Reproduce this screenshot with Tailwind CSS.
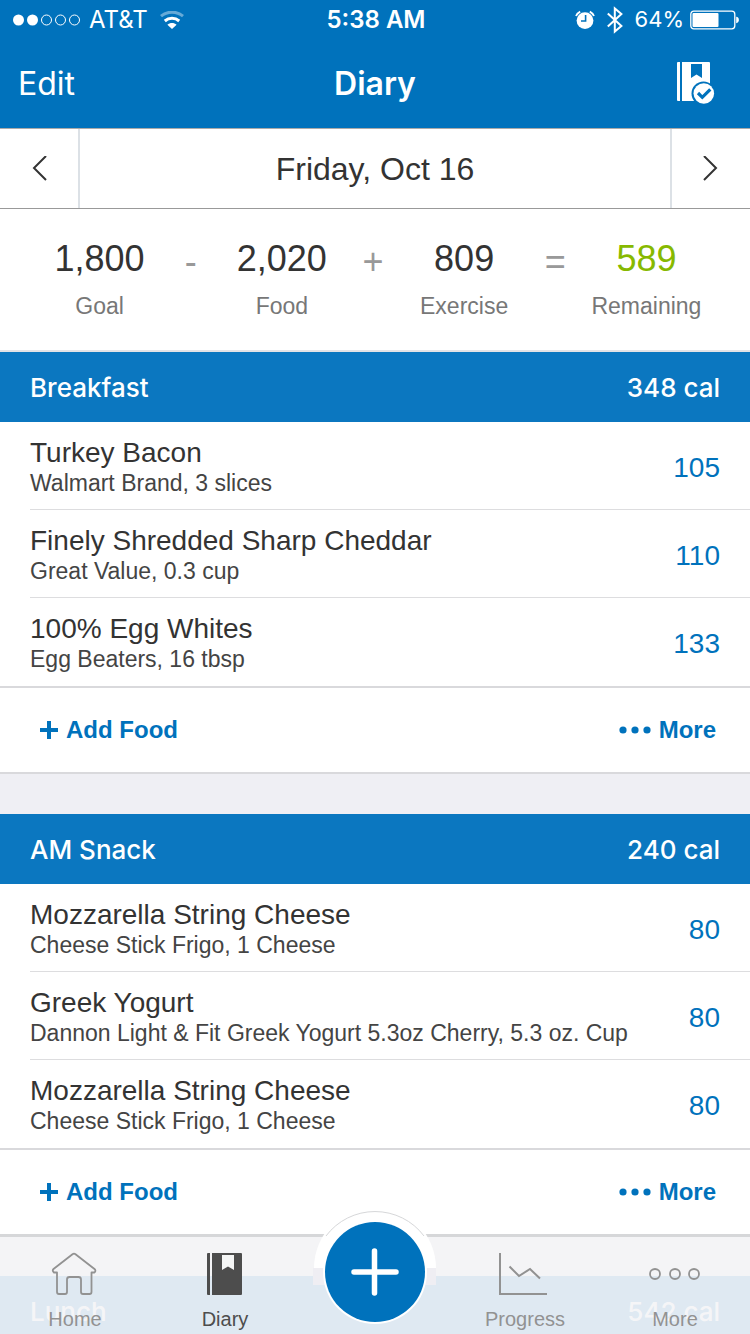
<!DOCTYPE html>
<html lang="en">
<head>
    <meta charset="UTF-8">
    <meta name="viewport" content="width=device-width, initial-scale=1.0">
    <title>Diary</title>
    <script src="https://cdn.jsdelivr.net/npm/@tailwindcss/browser@4"></script>
</head>
<body class="relative flex h-screen flex-col overflow-hidden bg-[#efeff4] font-['Liberation_Sans',Arial,sans-serif] text-[#333333]">

    <!-- Header -->
    <header class="shrink-0 border-b border-[#aaaaaa] bg-[#0072bc] font-[Inter,sans-serif] text-white">
        <div class="grid h-10 grid-cols-3 items-center pr-[10px] pl-3 text-2xl">
            <div class="flex items-center gap-2">
                <svg class="h-3 w-[69px]" viewBox="0 0 69 12" fill="none" stroke="#fff">
                    <circle cx="6.5" cy="6" r="5.5" fill="#fff" stroke="none"/>
                    <circle cx="20.5" cy="6" r="5.5" fill="#fff" stroke="none"/>
                    <circle cx="34.5" cy="6" r="5"/>
                    <circle cx="48.5" cy="6" r="5"/>
                    <circle cx="62.5" cy="6" r="5"/>
                </svg>
                <span>AT&amp;T</span>
                <svg class="ml-1 h-[18px] w-6" viewBox="0 0 24 18" fill="none" stroke="#fff" stroke-width="3">
                    <path d="M1 5.2C7.2-.2 16.8-.2 23 5.2" opacity=".4"/>
                    <path d="M4.8 10C9 6.400 15 6.400 19.200 10"/>
                    <path d="M12 18l-4.600-4.200c2.500-2.300 6.700-2.300 9.200 0z" fill="#fff" stroke="none"/>
                </svg>
            </div>
            <div class="text-center font-semibold">5:38 AM</div>
            <div class="flex items-center justify-end text-[22px]">
                <svg class="h-5 w-5" viewBox="0 0 20 20">
                    <circle cx="10" cy="10.6" r="8.4" fill="#fff"/>
                    <path d="M1 6A9 9 0 0 1 5.2 1.6M19 6A9 9 0 0 0 14.8 1.6" fill="none" stroke="#fff" stroke-width="1.8"/>
                    <path d="M10.6 5v6H6" fill="none" stroke="#0072bc" stroke-width="1.6"/>
                </svg>
                <svg class="ml-3 h-7 w-4" viewBox="0 0 16 28" fill="none" stroke="#fff" stroke-width="2">
                    <path d="M.8 7.6L14.4 20 7.8 25.6V2.4L14.4 8 .8 20.4"/>
                </svg>
                <span class="mr-[6px] ml-3">64%</span>
                <svg class="h-5 w-[50px]" viewBox="0 0 50 20">
                    <rect x=".8" y="1.2" width="44" height="17.6" rx="3" fill="none" stroke="#fff" stroke-width="1.3"/>
                    <rect x="2.5" y="3" width="26" height="14" rx="1" fill="#fff"/>
                    <path d="M46.2 6.8c3.6.4 3.6 6 0 6.4z" fill="#fff"/>
                </svg>
            </div>
        </div>
        <div class="grid h-22 grid-cols-3 items-center px-[18px] text-[32px]">
            <button type="button" class="justify-self-start">Edit</button>
            <h1 class="text-center font-semibold">Diary</h1>
            <button type="button" class="mr-4 justify-self-end" aria-label="Complete diary">
                <svg class="h-11 w-10" viewBox="0 0 40 44">
                    <path d="M2 0H4V39H2Q1 39 1 38V1Q1 0 2 0zM6 0H33Q34 0 34 1V39H6z" fill="#fff"/>
                    <path d="M15 2H26V16L20.500 12.500 15 16z" fill="#0072bc"/>
                    <circle cx="27.500" cy="31.500" r="12" fill="#0072bc"/>
                    <circle cx="27.800" cy="31.500" r="10.300" fill="#fff"/>
                    <path d="M22 31l4.300 4.300 8-8" fill="none" stroke="#0072bc" stroke-width="3.200"/>
                </svg>
            </button>
        </div>
    </header>

    <main class="grow overflow-hidden">
        <!-- Date picker -->
        <div class="flex h-20 items-stretch border-b border-[#999999] bg-white">
            <button type="button" class="flex w-20 items-center justify-center border-r-2 border-[#dce1e6]" aria-label="Previous day">
                <svg class="h-[26px] w-4" viewBox="0 0 16 26" fill="none" stroke="#333" stroke-width="2"><path d="M15 0L3 12 15 24"/></svg>
            </button>
            <h2 class="grow self-center text-center text-[32px]">Friday, Oct 16</h2>
            <button type="button" class="flex w-20 items-center justify-center border-l-2 border-[#dce1e6]" aria-label="Next day">
                <svg class="h-[26px] w-4" viewBox="0 0 16 26" fill="none" stroke="#333" stroke-width="2"><path d="M1 0L13 12 1 24"/></svg>
            </button>
        </div>

        <!-- Calories summary -->
        <div class="grid grid-cols-7 border-b-2 border-[#e3e3e6] bg-white pt-[30px] pr-[58px] pb-[29px] pl-[54px] text-4xl/10 whitespace-nowrap text-[#999999]">
            <div class="flex flex-col items-center"><span class="text-[#333333]">1,800</span><span class="mt-3 text-[23px]/[30px] text-[#777777]">Goal</span></div>
            <span class="text-center leading-[46px]">-</span>
            <div class="flex flex-col items-center"><span class="text-[#333333]">2,020</span><span class="mt-3 text-[23px]/[30px] text-[#777777]">Food</span></div>
            <span class="text-center leading-[46px]">+</span>
            <div class="flex flex-col items-center"><span class="text-[#333333]">809</span><span class="mt-3 text-[23px]/[30px] text-[#777777]">Exercise</span></div>
            <span class="text-center leading-[46px]">=</span>
            <div class="flex flex-col items-center"><span class="text-[#87b900]">589</span><span class="mt-3 text-[23px]/[30px] text-[#777777]">Remaining</span></div>
        </div>

        <!-- Breakfast -->
        <section class="mb-10 border-b-2 border-[#d9d9dc] bg-white">
            <div class="flex h-[70px] items-center justify-between bg-[#0b77c0] px-[30px] font-[Inter,sans-serif] text-[26px] font-medium text-white">
                <h3>Breakfast</h3>
                <span>348 cal</span>
            </div>
            <ul class="text-[28px]/[30px]">
                <li class="ml-[30px] flex items-center justify-between border-b border-[#dddddf] pt-4 pr-[30px] pb-[11px] last:border-transparent">
                    <div><p>Turkey Bacon</p><p class="text-[23px]/[30px] text-[#444444]">Walmart Brand, 3 slices</p></div>
                    <span class="text-[#0072bc]">105</span>
                </li>
                <li class="ml-[30px] flex items-center justify-between border-b border-[#dddddf] pt-4 pr-[30px] pb-[11px] last:border-transparent">
                    <div><p>Finely Shredded Sharp Cheddar</p><p class="text-[23px]/[30px] text-[#444444]">Great Value, 0.3 cup</p></div>
                    <span class="text-[#0072bc]">110</span>
                </li>
                <li class="ml-[30px] flex items-center justify-between border-b border-[#dddddf] pt-4 pr-[30px] pb-[11px] last:border-transparent">
                    <div><p>100% Egg Whites</p><p class="text-[23px]/[30px] text-[#444444]">Egg Beaters, 16 tbsp</p></div>
                    <span class="text-[#0072bc]">133</span>
                </li>
            </ul>
            <div class="flex h-[86px] items-center justify-between border-t-2 border-[#d9d9dc] pr-[34px] pl-10 text-2xl font-bold text-[#0072bc]">
                <button type="button" class="flex items-center gap-2">
                    <svg class="h-[18px] w-[18px]" viewBox="0 0 18 18" fill="#0072bc"><path d="M7 0h4v7h7v4h-7v7H7v-7H0V7h7z"/></svg>
                    Add Food
                </button>
                <button type="button" class="flex items-center gap-2">
                    <svg class="h-2 w-8" viewBox="0 0 32 8" fill="#0072bc"><circle cx="4" cy="4" r="3.600"/><circle cx="16" cy="4" r="3.600"/><circle cx="28" cy="4" r="3.600"/></svg>
                    More
                </button>
            </div>
        </section>

        <!-- AM Snack -->
        <section class="mb-10 border-b-2 border-[#d9d9dc] bg-white">
            <div class="flex h-[70px] items-center justify-between bg-[#0b77c0] px-[30px] font-[Inter,sans-serif] text-[26px] font-medium text-white">
                <h3>AM Snack</h3>
                <span>240 cal</span>
            </div>
            <ul class="text-[28px]/[30px]">
                <li class="ml-[30px] flex items-center justify-between border-b border-[#dddddf] pt-4 pr-[30px] pb-[11px] last:border-transparent">
                    <div><p>Mozzarella String Cheese</p><p class="text-[23px]/[30px] text-[#444444]">Cheese Stick Frigo, 1 Cheese</p></div>
                    <span class="text-[#0072bc]">80</span>
                </li>
                <li class="ml-[30px] flex items-center justify-between border-b border-[#dddddf] pt-4 pr-[30px] pb-[11px] last:border-transparent">
                    <div><p>Greek Yogurt</p><p class="text-[23px]/[30px] text-[#444444]">Dannon Light &amp; Fit Greek Yogurt 5.3oz Cherry, 5.3 oz. Cup</p></div>
                    <span class="text-[#0072bc]">80</span>
                </li>
                <li class="ml-[30px] flex items-center justify-between border-b border-[#dddddf] pt-4 pr-[30px] pb-[11px] last:border-transparent">
                    <div><p>Mozzarella String Cheese</p><p class="text-[23px]/[30px] text-[#444444]">Cheese Stick Frigo, 1 Cheese</p></div>
                    <span class="text-[#0072bc]">80</span>
                </li>
            </ul>
            <div class="flex h-[86px] items-center justify-between border-t-2 border-[#d9d9dc] pr-[34px] pl-10 text-2xl font-bold text-[#0072bc]">
                <button type="button" class="flex items-center gap-2">
                    <svg class="h-[18px] w-[18px]" viewBox="0 0 18 18" fill="#0072bc"><path d="M7 0h4v7h7v4h-7v7H7v-7H0V7h7z"/></svg>
                    Add Food
                </button>
                <button type="button" class="flex items-center gap-2">
                    <svg class="h-2 w-8" viewBox="0 0 32 8" fill="#0072bc"><circle cx="4" cy="4" r="3.600"/><circle cx="16" cy="4" r="3.600"/><circle cx="28" cy="4" r="3.600"/></svg>
                    More
                </button>
            </div>
        </section>

        <!-- Lunch -->
        <section>
            <div class="flex h-[70px] items-center justify-between bg-[#0b77c0] px-[30px] font-[Inter,sans-serif] text-[26px] font-medium text-white">
                <h3>Lunch</h3>
                <span>542 cal</span>
            </div>
        </section>
    </main>

    <!-- Tab bar, translucent over the list -->
    <nav class="absolute inset-x-0 bottom-0 grid h-25 grid-cols-5 border-t-3 border-[#d6d7d9] bg-[#f4f4f6]/91 bg-clip-padding text-xl/6 text-[#929292]">
        <a href="#home" class="flex flex-col items-center pt-[14px]">
            <svg class="h-11 w-12" viewBox="0 0 48 44" fill="none" stroke="#929292" stroke-width="1.800" stroke-linejoin="round">
                <path d="M21.500 3.200Q23 2 24.500 3.200L43.500 18Q45.300 19.500 43.500 21.500H40.500V41Q40.500 43 38.500 43H32Q30 43 30 41V28.500Q30 26 27.500 26H18.500Q16 26 16 28.500V41Q16 43 14 43H8Q6 43 6 41V21.500H3Q.8 19.500 2.500 18z"/>
            </svg>
            <span class="mt-3">Home</span>
        </a>
        <a href="#diary" class="flex flex-col items-center pt-[14px] text-[#4d4d4d]">
            <svg class="h-11 w-9" viewBox="0 0 36 44" fill="#4d4d4d">
                <path d="M0 3Q0 2 1 2H3V44H1Q0 44 0 43zM5 2H34Q35 2 35 3V43Q35 44 34 44H5z"/>
                <path d="M15 4H27V19L21 15.500 15 19z" fill="#f4f5f5"/>
            </svg>
            <span class="mt-3">Diary</span>
        </a>
        <span></span>
        <a href="#progress" class="flex flex-col items-center pt-[14px]">
            <svg class="h-11 w-[52px]" viewBox="0 0 52 44" fill="none" stroke="#929292" stroke-width="2">
                <path d="M1 2V43H48"/>
                <path d="M10.500 15.500L20 25 31 18 41 27.500"/>
            </svg>
            <span class="mt-3">Progress</span>
        </a>
        <a href="#more" class="flex flex-col items-center pt-[14px]">
            <svg class="h-11 w-[52px]" viewBox="0 0 52 44" fill="none" stroke="#929292" stroke-width="1.800">
                <circle cx="6" cy="23" r="5"/>
                <circle cx="26" cy="23" r="5"/>
                <circle cx="45" cy="23" r="5"/>
            </svg>
            <span class="mt-3">More</span>
        </a>
    </nav>

    <button type="button" class="absolute bottom-0 left-1/2 -translate-x-1/2" aria-label="Add">
        <svg class="h-31 w-31" viewBox="0 0 124 124">
            <path d="M1 58A61 61 0 0 1 123 58z" fill="#fff"/>
            <path d="M13 26A61 60.500 0 0 1 111 26" fill="none" stroke="#d6d7d9"/>
            <path d="M0 58H123V75H0z" fill="#efeef3"/>
            <circle cx="62" cy="62" r="52" fill="#fff"/>
            <circle cx="62" cy="62" r="50" fill="#0072bc"/>
            <path d="M61.500 41V83M41 62H83" stroke="#fff" stroke-width="5.500" stroke-linecap="round"/>
        </svg>
    </button>

</body>
</html>
